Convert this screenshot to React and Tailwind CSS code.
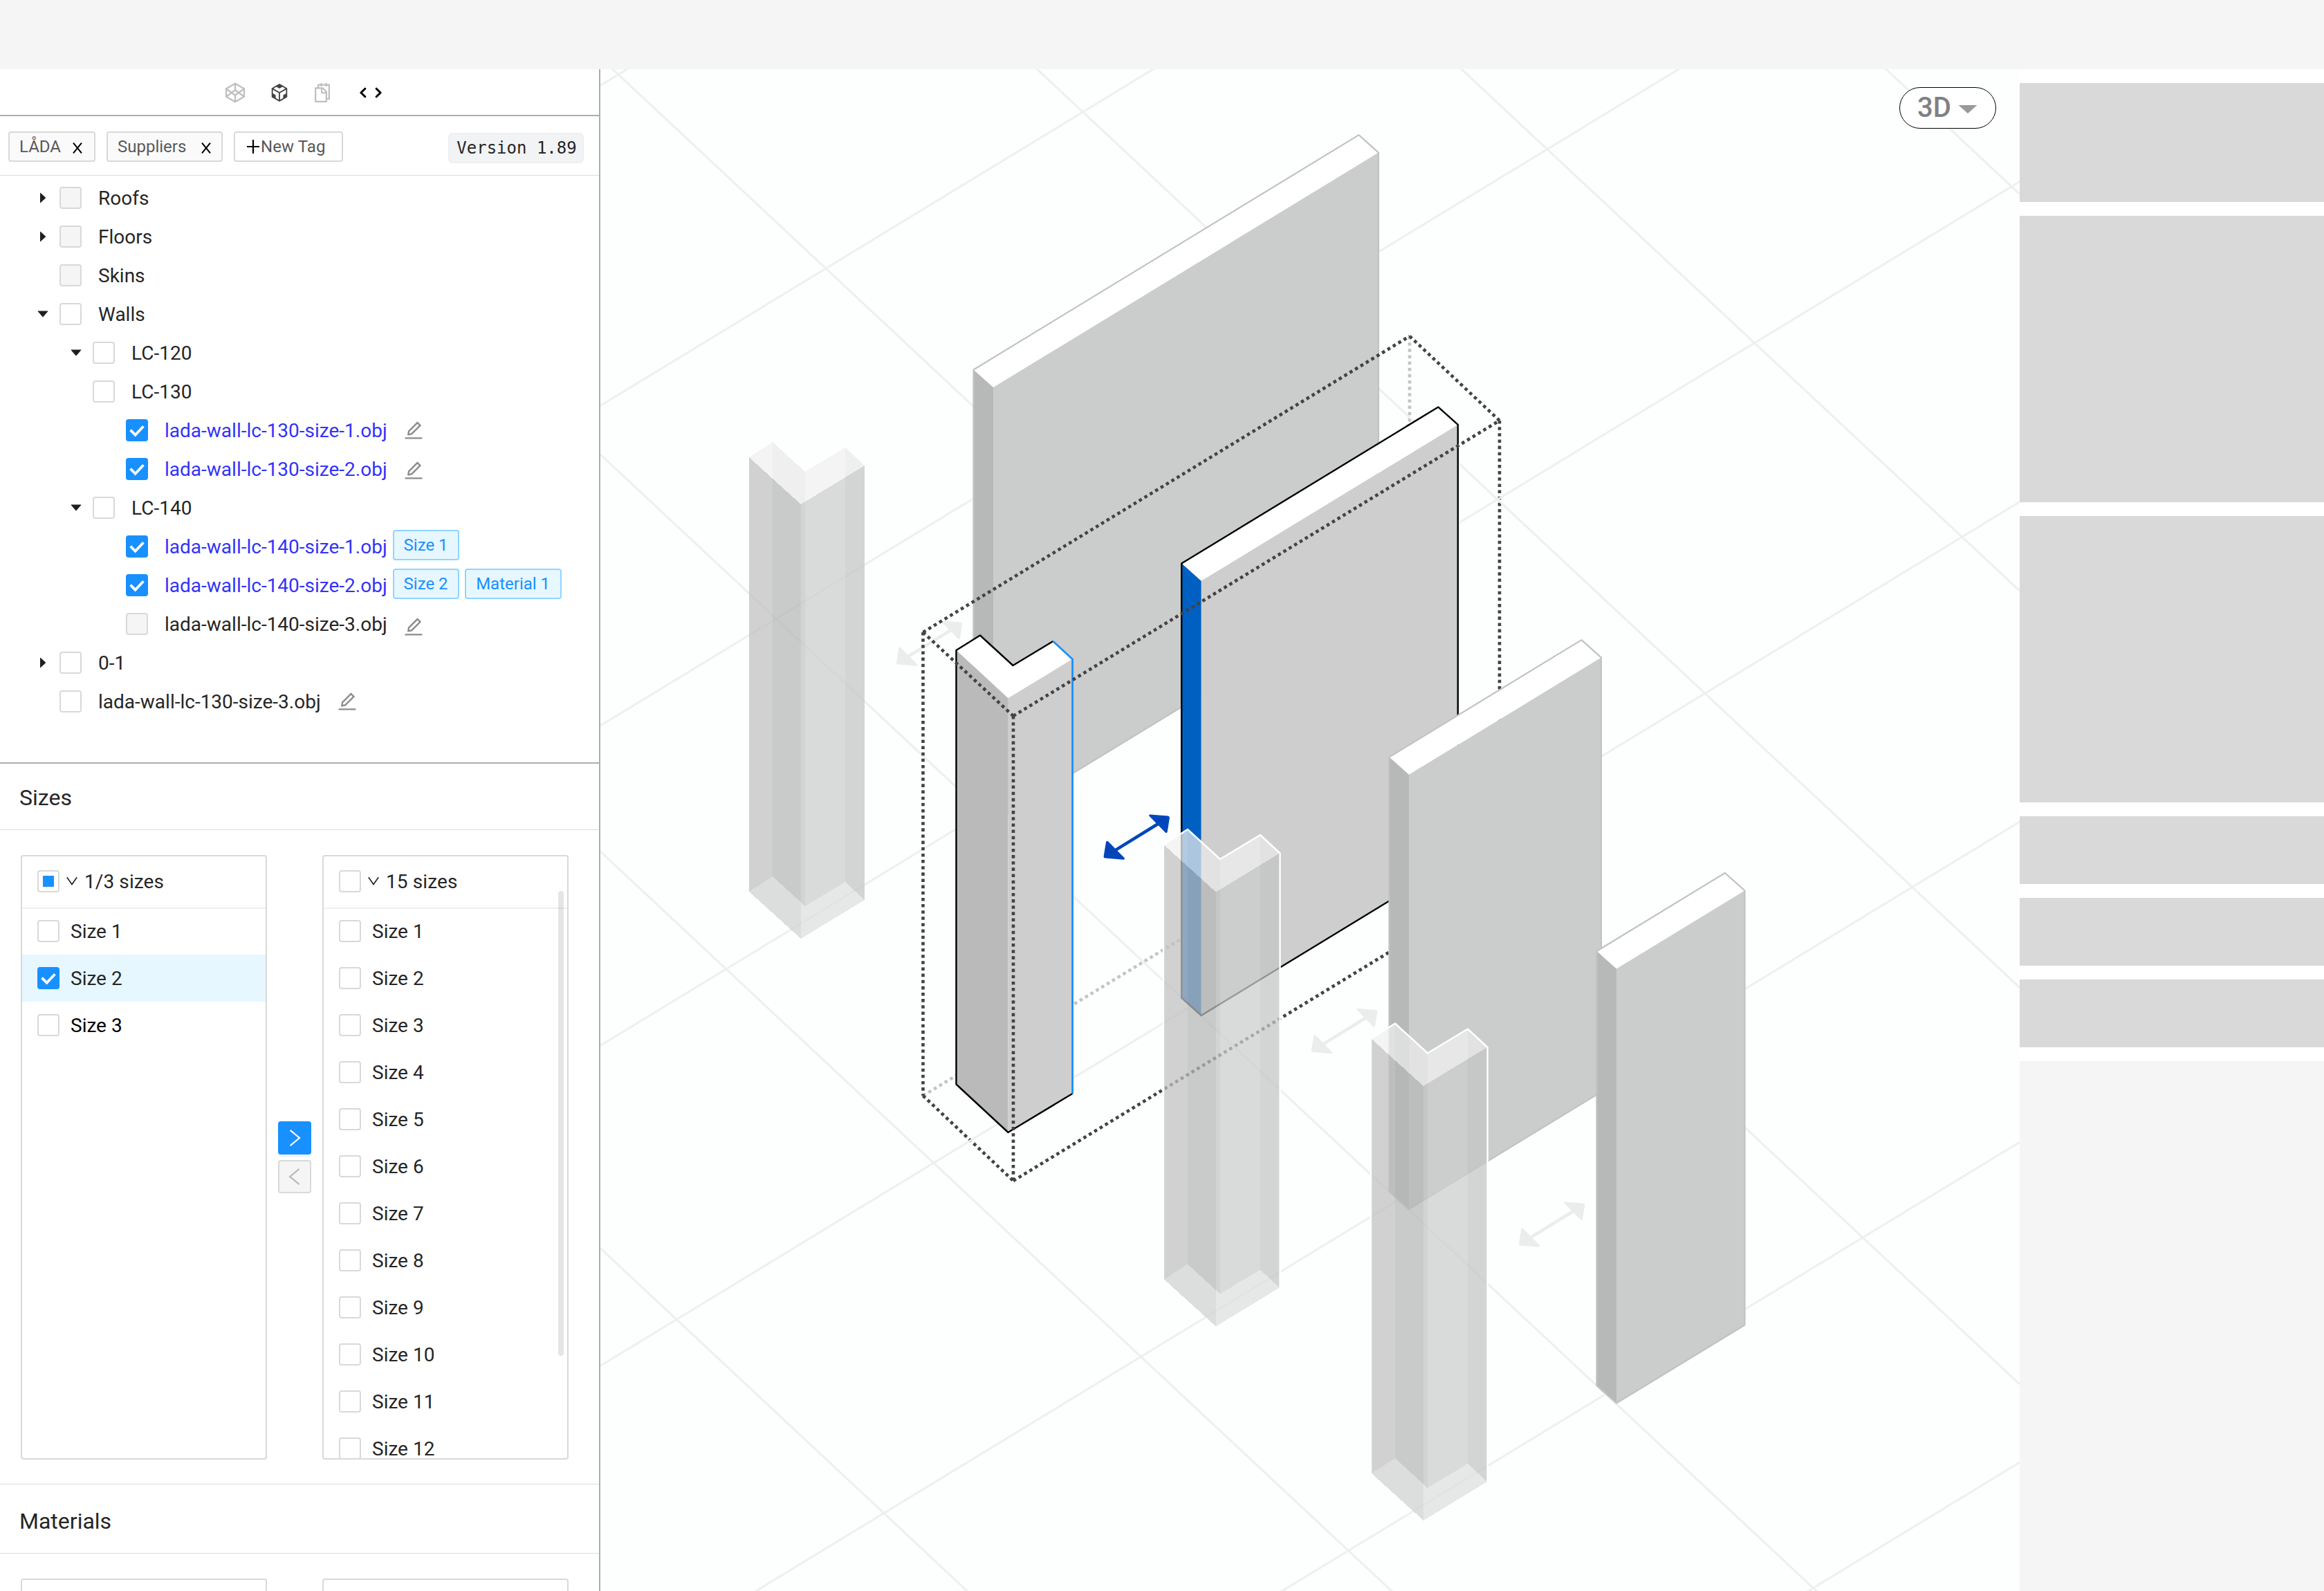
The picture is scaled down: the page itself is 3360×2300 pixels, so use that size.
import React from "react";
import { AiOutlineCodeSandbox, AiOutlineSnippets, AiOutlineEdit } from "react-icons/ai";

const tree = [
  { label: "Roofs", level: 0, caret: "right", state: "disabled" },
  { label: "Floors", level: 0, caret: "right", state: "disabled" },
  { label: "Skins", level: 0, state: "disabled" },
  { label: "Walls", level: 0, caret: "down" },
  { label: "LC-120", level: 1, caret: "down" },
  { label: "LC-130", level: 1 },
  { label: "lada-wall-lc-130-size-1.obj", level: 2, state: "checked", edit: true },
  { label: "lada-wall-lc-130-size-2.obj", level: 2, state: "checked", edit: true, low: true },
  { label: "LC-140", level: 1, caret: "down" },
  { label: "lada-wall-lc-140-size-1.obj", level: 2, state: "checked", tags: ["Size 1"] },
  { label: "lada-wall-lc-140-size-2.obj", level: 2, state: "checked", tags: ["Size 2", "Material 1"] },
  { label: "lada-wall-lc-140-size-3.obj", level: 2, state: "disabled", edit: true, lower: true },
  { label: "0-1", level: 0, caret: "right" },
  { label: "lada-wall-lc-130-size-3.obj", level: 0, edit: true },
];

const indents = ["pl-[38px]", "pl-[86px]", "pl-[134px]"];

function Checkbox({ state }) {
  if (state === "checked") {
    return (
      <span className="flex size-8 shrink-0 rounded-[4px] bg-[#1890ff]">
        <svg className="size-8" viewBox="0 0 32 32" fill="none" stroke="#fff" strokeWidth="3.8">
          <path d="M6.6 15.6l7 7.2L25.4 10.2" />
        </svg>
      </span>
    );
  }
  if (state === "partial") {
    return (
      <span className="flex size-8 shrink-0 items-center justify-center rounded-[4px] border-2 border-[#d9d9d9] bg-white">
        <span className="size-4 bg-[#1890ff]" />
      </span>
    );
  }
  if (state === "disabled") {
    return <span className="size-8 shrink-0 rounded-[4px] border-2 border-[#d9d9d9] bg-[#f5f5f5]" />;
  }
  return <span className="size-8 shrink-0 rounded-[4px] border-2 border-[#d9d9d9] bg-white" />;
}

function Caret({ dir }) {
  return (
    <span className="flex w-12 shrink-0 items-center justify-center">
      {dir === "right" && (
        <svg className="h-4 w-4" viewBox="0 0 16 16" fill="#1f1f1f">
          <path d="M4 1.2v13.6q0 .9.8.3l7-6.6q.6-.5 0-1l-7-6.6q-.8-.6-.8.3z" />
        </svg>
      )}
      {dir === "down" && (
        <svg className="h-4 w-4" viewBox="0 0 16 16" fill="#1f1f1f">
          <path d="M.9 3.4h14.2q.8 0 .3.7l-6.9 8q-.5.6-1 0l-6.9-8q-.5-.7.3-.7z" />
        </svg>
      )}
    </span>
  );
}

function TreeRow({ row }) {
  const link = row.state === "checked";
  return (
    <div className={"flex h-14 items-center " + indents[row.level]}>
      <Caret dir={row.caret} />
      <Checkbox state={row.state} />
      <span
        className={
          "ml-6 whitespace-nowrap pt-[2px] text-[28px] leading-none " + (link ? "text-[#3333fa]" : "text-[#262626]")
        }
      >
        {row.label}
      </span>
      {row.edit && (
        <AiOutlineEdit
          className={"ml-[22px] size-8 text-[#8c8c8c] " + (row.lower ? "mt-2" : row.low ? "mt-1" : "")}
        />
      )}
      {row.tags && (
        <span className="-mt-1 ml-2 flex gap-2">
          {row.tags.map((t, i) => (
            <span
              key={t}
              className={
                "flex h-11 items-center justify-center whitespace-nowrap rounded-[4px] border-2 border-[#91d5ff] bg-[#e6f7ff] text-[24px] leading-none text-[#1890ff] " +
                (i === 0 ? "w-24" : "w-[140px]")
              }
            >
              {t}
            </span>
          ))}
        </span>
      )}
    </div>
  );
}

function CloseIcon() {
  return (
    <svg className="ml-auto mt-[4px] h-4 w-[14px]" viewBox="0 0 14 16" fill="none" stroke="#000" strokeWidth="2">
      <path d="M1 .6l12 14.8M13 .6L1 15.4" />
    </svg>
  );
}

function TransferList({ head, partial, rows, scroll }) {
  return (
    <div className="relative flex h-[874px] w-[356px] flex-col overflow-hidden rounded-[4px] border-2 border-[#d9d9d9] bg-white">
      <div className="flex h-[76px] shrink-0 items-center border-b-2 border-[#f0f0f0] pb-[2px] pl-[22px]">
        <Checkbox state={partial ? "partial" : undefined} />
        <svg className="ml-[10px] h-4 w-4" viewBox="0 0 16 16" fill="none" stroke="#262626" strokeWidth="1.7">
          <path d="M.8 2.2L8 12.6l7.2-10.4" />
        </svg>
        <span className="ml-[10px] pt-[2px] text-[28px] leading-none tracking-[0.1px] text-[#262626]">{head}</span>
      </div>
      <div className="-mt-[2px] flex flex-col">
        {rows.map((r) => (
          <div
            key={r.label}
            className={"flex h-[68px] shrink-0 items-center pl-[22px] " + (r.checked ? "bg-[#e6f7ff]" : "")}
          >
            <Checkbox state={r.checked ? "checked" : undefined} />
            <span className={"ml-4 pt-[2px] text-[28px] leading-none " + (r.dark ? "text-black" : "text-[#262626]")}>
              {r.label}
            </span>
          </div>
        ))}
      </div>
      {scroll && <div className="absolute right-[5px] top-[50px] h-[672px] w-2 rounded-full bg-black/10" />}
    </div>
  );
}

function Arrow({ x, y, color }) {
  return (
    <g transform={`translate(${x} ${y})`} fill={color}>
      <path d="M0 -1.5L3.4 -22Q4.6 -24.4 6.6 -22.6L30 1.2Q31 3.6 28.6 3.7L2 1.6Q-.4 1 0 -1.5z" />
      <path d="M95.2 -56L92 -36Q91 -34 89.2 -35.6L65.6 -59.4Q64.6 -61.6 67.4 -61.6L93 -59.4Q95.6 -58.8 95.2 -56z" />
      <path d="M16 -9.4L78.5 -48" stroke={color} strokeWidth="4.6" />
    </g>
  );
}

function GhostPost({ x, y, outline }) {
  return (
    <g transform={`translate(${x} ${y})`}>
      <g fillOpacity=".74" shapeRendering="crispEdges">
        <path fill="#eff0ef" d="M0 0L34 -22V31z" />
        <path fill="#e9eae9" d="M34 -22L81 21V64.4L75 68L34 31z" />
        <path fill="#eff0ef" d="M81 21L139 -14V29L81 64.4z" />
        <path fill="#e9eae9" d="M139 -14L167 12L139 29z" />
        <path fill="#bfc1c0" d="M0 0L34 31V606L0 628z" />
        <path fill="#b6b8b7" d="M34 31L75 68V643.5L34 606z" />
        <path fill="#c2c4c3" d="M75 68L81 64.4V649L75 643.5z" />
        <path fill="#cccecd" d="M81 64.4L139 29V614L81 649z" />
        <path fill="#c4c6c5" d="M139 29L167 12V640L139 614z" />
        <path fill="#d0d2d1" d="M0 628L34 606L75 643.5V696z" />
        <path fill="#dddfde" d="M75 643.5L81 649L139 614L167 640L75 696z" />
      </g>
      {outline && (
        <path
          d="M-1 628V0L34 -22.5L81 20.5L139 -14.5L167.6 12V640"
          fill="none"
          stroke="#fff"
          strokeWidth="2.4"
          strokeLinejoin="round"
        />
      )}
    </g>
  );
}

function Wall({ x, y, length, active }) {
  const dy = -length * 0.6093;
  return (
    <g transform={`translate(${x} ${y})`}>
      <path fill="#fff" d={`M0 0L${length} ${dy}L${length + 28.5} ${dy + 25.5}L28.5 25.5z`} />
      <path fill={active ? "#0060c2" : "#b7b9b8"} d="M0 0L28.5 25.5V653.5L0 628z" />
      <path
        fill={active ? "#cecece" : "#cbcdcc"}
        d={`M28.5 25.5L${length + 28.5} ${dy + 25.5}V${dy + 653.5}L28.5 653.5z`}
      />
      <path
        fill="none"
        stroke={active ? "#000" : "#c1c3c2"}
        strokeWidth={active ? 2.4 : 2.2}
        strokeLinejoin="round"
        d={`M0 0V628L28.5 653.5L${28.5 + length} ${653.5 + dy}V${25.5 + dy}L${length} ${dy}z`}
      />
    </g>
  );
}

const fallLines = [1804.5, 1231, 657, 83.5, -490, -1063.5, -1637];
const riseLines = [123.5, 586.5, 1049, 1511.5, 1974.5, 2437, 2900, 3363];

function Scene() {
  return (
    <svg className="block h-[2200px] w-[2052px]" viewBox="868 100 2052 2200">
      <rect x="868" y="100" width="2052" height="2200" fill="#fdfefe" />
      <g fill="none" stroke="#c3c4c4" strokeWidth="4.6" strokeDasharray="4.57 4.57">
        <path d="M2038 486V1157" />
        <path d="M1334.5 1584L2038 1157" />
      </g>
      <g fill="none" stroke="#434343" strokeWidth="4.6" strokeDasharray="4.57 4.57">
        <path d="M1334.5 1584L1465 1707" />
        <path d="M1465 1707L2168 1279.5" />
        <path d="M2168 608V1279" />
      </g>
      <g stroke="#edf0ee" strokeWidth="3">
        {fallLines.map((c) => (
          <path key={c} d={`M868 ${c}L2920 ${c + 2052 * 0.9345}`} />
        ))}
        {riseLines.map((c) => (
          <path key={c} d={`M868 ${c}L2920 ${c - 2052 * 0.6087}`} />
        ))}
      </g>
      <Wall x={1407.5} y={534.5} length={557} />
      <Arrow x={1296} y={959} color="#ebedec" />
      <GhostPost x={1083} y={661} />
      <Wall x={1708.3} y={814.5} length={371} active />

      <g>
        <path fill="#fff" d="M1382.5 940L1417 918L1464.5 962L1522.5 927L1550.5 953L1457.5 1009.5z" />
        <path fill="#bababa" d="M1382.5 940L1457.5 1009.5V1637.5L1382.5 1568z" />
        <path fill="#cecece" d="M1457.5 1009.5L1550.5 953V1581L1457.5 1637.5z" />
        <path
          d="M1522.5 927L1464.5 962L1417 918.5L1382.5 940V1567.5L1457.5 1637L1550.5 1581"
          fill="none"
          stroke="#000"
          strokeWidth="2.4"
          strokeLinejoin="round"
        />
        <path d="M1522.5 927L1550.6 953V1581" fill="none" stroke="#1890ff" strokeWidth="2.8" strokeLinejoin="round" />
      </g>

      <g fill="none" stroke="#434343" strokeWidth="4.6" strokeDasharray="4.57 4.57">
        <path d="M1334.5 914V1584" />
        <path d="M1334.5 914L2038 486" />
        <path d="M1334.5 914L1465 1035" />
        <path d="M1465 1035V1707" />
        <path d="M1465 1035L2168 608" />
        <path d="M2038 486L2168 608" />
      </g>

      <Arrow x={1595.7} y={1239} color="#0046ba" />
      <Wall x={2008.5} y={1094.5} length={278} />
      <GhostPost x={1683} y={1221.5} outline />
      <Arrow x={1896} y={1519.5} color="#ebedec" />
      <GhostPost x={1983} y={1502} outline />
      <Wall x={2308.5} y={1375} length={185.5} />
      <Arrow x={2196} y={1799} color="#ebedec" />
    </svg>
  );
}

const allSizes = Array.from({ length: 12 }, (_, i) => ({ label: "Size " + (i + 1) }));

export default function App() {
  return (
    <div
      className="flex h-[2300px] w-[3360px] flex-col overflow-hidden bg-white"
      style={{ fontFamily: 'Roboto, "Liberation Sans", sans-serif' }}
    >
      <header className="h-[100px] shrink-0 bg-[#f5f5f5]" />
      <div className="flex h-[2200px]">
        <aside className="flex h-full w-[868px] shrink-0 flex-col overflow-hidden border-r-2 border-[#adadad] bg-white">
          <div className="flex h-[68px] shrink-0 items-center border-b-2 border-[#adadad] pl-[325px] pt-[2px]">
            <svg
              className="h-[30px] w-[30px]"
              viewBox="0 0 30 30"
              fill="none"
              stroke="#bfbfbf"
              strokeWidth="2.3"
              strokeLinejoin="round"
              strokeLinecap="round"
            >
              <path d="M15 1.8L28 9.3v11.4L15 28.2L2 20.7V9.3z" />
              <path d="M2 9.3l13 9.5l13-9.5M2 20.7l13-9.5l13 9.5M15 1.8v9.4M15 18.8v9.4" />
            </svg>
            <AiOutlineCodeSandbox className="ml-[33px] size-8 text-[#434343]" />
            <AiOutlineSnippets className="ml-[30px] size-8 text-[#bfbfbf]" />
            <svg
              className="ml-[38px] h-4 w-8"
              viewBox="0 0 32 16"
              fill="none"
              stroke="#000"
              strokeWidth="3"
              strokeLinecap="round"
              strokeLinejoin="round"
            >
              <path d="M7.8 2.2L1.9 8l5.9 5.8M24.2 2.2L30.1 8l-5.9 5.8" />
            </svg>
          </div>

          <div className="flex h-[86px] shrink-0 items-start border-b border-[#dcdcdc] pl-3 pr-[22px] pt-[22px] text-[24px] leading-none text-[#595959]">
            <div className="flex h-11 w-[126px] items-center rounded-[4px] border-2 border-[#d9d9d9] bg-[#fafafa] pl-[14px] pr-[17px]">
              <span>LÅDA</span>
              <CloseIcon />
            </div>
            <div className="ml-4 flex h-11 w-[168px] items-center rounded-[4px] border-2 border-[#d9d9d9] bg-[#fafafa] pl-[14px] pr-[15px]">
              <span>Suppliers</span>
              <CloseIcon />
            </div>
            <div className="ml-4 flex h-11 w-[158px] items-center rounded-[4px] border-2 border-[#d9d9d9] bg-white pl-[17px]">
              <svg className="h-5 w-[18px]" viewBox="0 0 18 20" stroke="#000" strokeWidth="2.2">
                <path d="M9 0v20M0 10h18" />
              </svg>
              <span className="ml-[2px] whitespace-nowrap tracking-[0.1px]">New Tag</span>
            </div>
            <div className="ml-auto mt-[2px] flex h-11 w-[196px] items-center justify-center whitespace-nowrap rounded-[6px] border-2 border-[#eeeff0] bg-[#f2f3f5] pl-[2px] font-['DejaVu_Sans_Mono',monospace] text-[#262626]">
              Version 1.89
            </div>
          </div>

          <div className="h-[850px] shrink-0 border-b-2 border-[#adadad] pt-1">
            {tree.map((row) => (
              <TreeRow key={row.label} row={row} />
            ))}
          </div>

          <div className="flex h-24 shrink-0 items-center border-b border-[#dcdcdc] pl-7 pt-[3px] text-[32px] leading-none text-[#262626]">
            Sizes
          </div>
          <div className="flex shrink-0 items-center border-b border-[#dcdcdc] pb-[35px] pl-[30px] pt-9">
            <TransferList
              head="1/3 sizes"
              partial
              rows={[{ label: "Size 1" }, { label: "Size 2", checked: true }, { label: "Size 3", dark: true }]}
            />
            <div className="mx-4 flex flex-col gap-2">
              <div className="flex size-12 items-center justify-center rounded-[4px] bg-[#1890ff] shadow-[0_4px_0_rgba(0,0,0,0.043)]">
                <svg className="size-6" viewBox="0 0 24 24" fill="none" stroke="#fff" strokeWidth="2.2">
                  <path d="M5.6 .9L19 12L5.6 23.1" />
                </svg>
              </div>
              <div className="flex size-12 items-center justify-center rounded-[4px] border-2 border-[#d9d9d9] bg-[#f5f5f5]">
                <svg className="size-6" viewBox="0 0 24 24" fill="none" stroke="#b8b8b8" strokeWidth="2.2">
                  <path d="M18.6 .9L5.2 12L18.6 23.1" />
                </svg>
              </div>
            </div>
            <TransferList head="15 sizes" rows={allSizes} scroll />
          </div>

          <div className="flex h-[100px] shrink-0 items-center border-b border-[#dcdcdc] pl-7 pt-[7px] text-[32px] leading-none text-[#262626]">
            Materials
          </div>
          <div className="flex shrink-0 gap-20 pl-[30px] pt-9">
            <div className="h-[874px] w-[356px] rounded-[4px] border-2 border-[#d9d9d9]" />
            <div className="h-[874px] w-[356px] rounded-[4px] border-2 border-[#d9d9d9]" />
          </div>
        </aside>

        <main className="relative w-[2052px] shrink-0 overflow-hidden">
          <Scene />
          <button className="absolute right-[34px] top-[26px] flex h-[60px] w-[140px] items-center rounded-full border border-black bg-white pl-[25px] text-[40px] font-medium leading-none text-[#808080]">
            3D
            <svg className="ml-[10px] mt-[3px] h-3 w-7" viewBox="0 0 28 12" fill="#9a9a9a">
              <path d="M.5 0h27L14 12z" />
            </svg>
          </button>
        </main>

        <section className="flex w-[440px] shrink-0 flex-col gap-5 bg-white pt-5">
          <div className="h-[172px] shrink-0 bg-[#d9d9d9]" />
          <div className="h-[414px] shrink-0 bg-[#d9d9d9]" />
          <div className="h-[414px] shrink-0 bg-[#d9d9d9]" />
          <div className="h-[98px] shrink-0 bg-[#d9d9d9]" />
          <div className="h-[98px] shrink-0 bg-[#d9d9d9]" />
          <div className="h-[98px] shrink-0 bg-[#d9d9d9]" />
          <div className="flex-1 bg-[#f5f5f5]" />
        </section>
      </div>
    </div>
  );
}
